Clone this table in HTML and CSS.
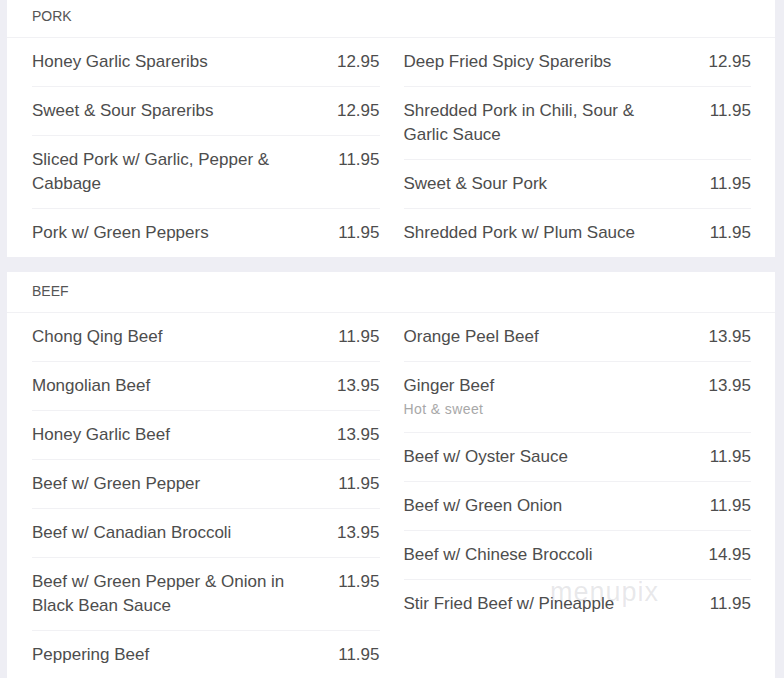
FILE: index.html
```html
<!DOCTYPE html>
<html>
<head>
<meta charset="utf-8">
<link rel="stylesheet" href="styles.css">
</head>
<body>
<div class="page">
  <section class="card pork">
    <div class="cat">PORK</div>
    <div class="cols">
      <div class="col">
        <div class="item"><span class="name">Honey Garlic Spareribs</span><span class="price">12.95</span></div>
        <div class="item"><span class="name">Sweet &amp; Sour Spareribs</span><span class="price">12.95</span></div>
        <div class="item"><span class="name">Sliced Pork w/ Garlic, Pepper &amp; Cabbage</span><span class="price">11.95</span></div>
        <div class="item"><span class="name">Pork w/ Green Peppers</span><span class="price">11.95</span></div>
      </div>
      <div class="col">
        <div class="item"><span class="name">Deep Fried Spicy Spareribs</span><span class="price">12.95</span></div>
        <div class="item"><span class="name">Shredded Pork in Chili, Sour &amp; Garlic Sauce</span><span class="price">11.95</span></div>
        <div class="item"><span class="name">Sweet &amp; Sour Pork</span><span class="price">11.95</span></div>
        <div class="item"><span class="name">Shredded Pork w/ Plum Sauce</span><span class="price">11.95</span></div>
      </div>
    </div>
  </section>
  <section class="card">
    <div class="cat">BEEF</div>
    <div class="cols">
      <div class="col">
        <div class="item"><span class="name">Chong Qing Beef</span><span class="price">11.95</span></div>
        <div class="item"><span class="name">Mongolian Beef</span><span class="price">13.95</span></div>
        <div class="item"><span class="name">Honey Garlic Beef</span><span class="price">13.95</span></div>
        <div class="item"><span class="name">Beef w/ Green Pepper</span><span class="price">11.95</span></div>
        <div class="item"><span class="name">Beef w/ Canadian Broccoli</span><span class="price">13.95</span></div>
        <div class="item"><span class="name">Beef w/ Green Pepper &amp; Onion in Black Bean Sauce</span><span class="price">11.95</span></div>
        <div class="item"><span class="name">Peppering Beef</span><span class="price">11.95</span></div>
      </div>
      <div class="col">
        <div class="item"><span class="name">Orange Peel Beef</span><span class="price">13.95</span></div>
        <div class="item"><span class="name">Ginger Beef<span class="desc">Hot &amp; sweet</span></span><span class="price">13.95</span></div>
        <div class="item"><span class="name">Beef w/ Oyster Sauce</span><span class="price">11.95</span></div>
        <div class="item"><span class="name">Beef w/ Green Onion</span><span class="price">11.95</span></div>
        <div class="item"><span class="name">Beef w/ Chinese Broccoli</span><span class="price">14.95</span></div>
        <div class="item"><span class="name">Stir Fried Beef w/ Pineapple</span><span class="price">11.95</span></div>
      </div>
    </div>
  </section>
  <span class="watermark">menupix</span>
</div>
</body>
</html>
```
FILE: styles.css
```css
html, body {
  margin: 0;
  padding: 0;
  background: #eeeef4;
}
body {
  font-family: "Liberation Sans", Arial, sans-serif;
  color: #4d4d4d;
}
.page {
  position: relative;
  padding: 0 9px 40px 7px;
  margin-top: -3px;
  display: flex;
  flex-direction: column;
  gap: 15px;
}
.card {
  background: #ffffff;
}
.cat {
  height: 40px;
  line-height: 39px;
  padding: 0 25px;
  font-size: 14px;
  color: #555555;
  border-bottom: 1px solid #f1f1f4;
}
.cols {
  display: grid;
  grid-template-columns: 1fr 1fr;
  column-gap: 24px;
  padding: 0 24px 0 25px;
}
.col {
  display: flex;
  flex-direction: column;
}
.item {
  display: flex;
  justify-content: space-between;
  align-items: flex-start;
  padding: 12px 0;
  font-size: 17px;
  line-height: 24px;
  border-bottom: 1px solid #f1f1f4;
}
.item:last-child {
  border-bottom: none;
}
.name {
  width: 75%;
  display: flex;
  flex-direction: column;
}
.price {
  text-align: right;
}
.desc {
  font-size: 14px;
  line-height: 22px;
  color: #a8a8a8;
  letter-spacing: 0.4px;
}
.watermark {
  position: absolute;
  left: 550px;
  top: 580px;
  font-size: 27px;
  letter-spacing: 1px;
  color: rgba(150, 150, 160, 0.22);
  pointer-events: none;
}
```
